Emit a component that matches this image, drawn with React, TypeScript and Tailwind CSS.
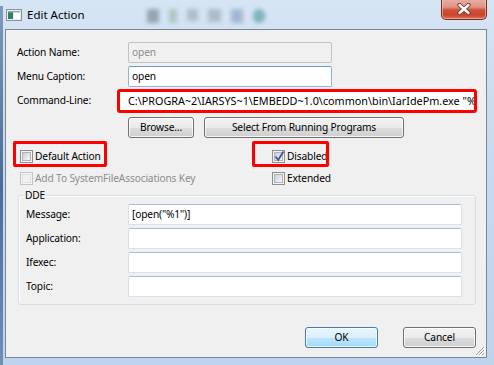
import React from "react";

function TextBox({
  value = "",
  variant = "normal",
  className = "",
}: {
  value?: string;
  variant?: "normal" | "disabled" | "focused";
  className?: string;
}) {
  const styles =
    variant === "disabled"
      ? "border-[#c3c3c3] bg-[#f0f0f0] text-[#8d8d8d]"
      : variant === "focused"
      ? "border-[#8fb5dc] border-t-[#6e9ccc] bg-white text-black"
      : "border-[#d6e1ec] border-t-[#a9bdd2] bg-white text-black";
  return (
    <div
      className={`flex h-[21px] items-center overflow-hidden whitespace-nowrap rounded-[2px] border pl-[3px] ${styles} ${className}`}
    >
      {value}
    </div>
  );
}

function Button({
  label,
  primary = false,
  className = "",
}: {
  label: string;
  primary?: boolean;
  className?: string;
}) {
  const styles = primary
    ? "border-[#3c7fb1] bg-[linear-gradient(to_bottom,#eaf6fd_0%,#d9f0fc_50%,#bee6fd_50%,#a7d9f5_100%)]"
    : "border-[#707070] bg-[linear-gradient(to_bottom,#f2f2f2_0%,#ebebeb_50%,#dddddd_50%,#cfcfcf_100%)]";
  return (
    <div
      className={`flex h-[21px] items-center justify-center rounded-[3px] border text-black shadow-[inset_0_0_0_1px_rgba(255,255,255,0.8)] ${styles} ${className}`}
    >
      {label}
    </div>
  );
}

function CheckBox({
  checked = false,
  disabled = false,
}: {
  checked?: boolean;
  disabled?: boolean;
}) {
  return (
    <span
      className={`relative flex h-[13px] w-[13px] shrink-0 items-center justify-center border ${
        disabled
          ? "border-[#c4c4c4] bg-[#f4f4f4]"
          : "border-[#8e8f8f] bg-[#f4f4f4]"
      }`}
    >
      <span
        className={`h-[9px] w-[9px] border ${
          disabled
            ? "border-[#e0e0e0] bg-[#f2f2f2]"
            : "border-[#aeb3b9] bg-[linear-gradient(135deg,#cbcfd5,#f6f6f6)]"
        }`}
      />
      {checked && (
        <svg
          className="absolute left-[1px] top-[-1px]"
          width="11"
          height="12"
          viewBox="0 0 11 12"
        >
          <path
            d="M1.5 6.5 L4.2 10 L9.5 1.5"
            fill="none"
            stroke="#3a57a0"
            strokeWidth="1.8"
          />
        </svg>
      )}
    </span>
  );
}

function TitleIcon() {
  return (
    <svg width="16" height="12" viewBox="0 0 16 12">
      <rect x="0.5" y="0.5" width="15" height="11" fill="#e9eef2" stroke="#8a9198" />
      <rect x="2" y="2" width="5" height="8" fill="#2f7d6b" />
      <rect x="8" y="2" width="6" height="8" fill="#ffffff" />
      <rect x="2" y="2" width="12" height="1.5" fill="#9aa7b3" />
    </svg>
  );
}

function CloseButton() {
  return (
    <div className="relative mt-[-1px] flex h-[21px] w-[46px] items-center justify-center rounded-b-[5px] border border-t-0 border-[#7a2a1e] bg-[linear-gradient(to_bottom,#eab0a3_0%,#e09482_40%,#cc5238_55%,#c9452d_80%,#d8725c_100%)] shadow-[inset_0_0_0_1px_rgba(255,220,210,0.5)]">
      <svg width="16" height="12" viewBox="0 0 16 12">
        <path
          d="M3.5 2 L12.5 10 M12.5 2 L3.5 10"
          stroke="#6b3a32"
          strokeWidth="4.2"
          strokeLinecap="round"
        />
        <path
          d="M3.5 2 L12.5 10 M12.5 2 L3.5 10"
          stroke="#ffffff"
          strokeWidth="2.4"
          strokeLinecap="round"
        />
      </svg>
    </div>
  );
}

function ResizeGrip() {
  return (
    <svg
      className="absolute bottom-[1px] right-[1px]"
      width="11"
      height="11"
      viewBox="0 0 11 11"
    >
      <path d="M10 2 L2 10 M10 5 L5 10 M10 8 L8 10" stroke="#a0a0a0" strokeWidth="1" />
      <path d="M11 3 L3 11 M11 6 L6 11 M11 9 L9 11" stroke="#ffffff" strokeWidth="1" />
    </svg>
  );
}

export default function App() {
  return (
    <div className="relative h-[365px] w-[494px] overflow-hidden bg-[linear-gradient(to_bottom,#d6e5f4_0%,#c9dcf0_30%,#bed4ec_100%)] font-['Noto_Sans',sans-serif] text-[10.2px] tracking-[-0.15px] text-black">
      {/* left frame shading */}
      <div className="absolute bottom-0 left-0 top-[6px] w-[3px] bg-[linear-gradient(to_bottom,#7e9bbd,#4b6c94_50%,#6f8fb5)]" />

      {/* Title bar */}
      <div className="flex h-[29px] items-start">
        <div className="ml-[6px] mt-[9px]">
          <TitleIcon />
        </div>
        <div className="ml-[5px] mt-[6px] text-[11.5px] leading-[18px] tracking-normal">Edit Action</div>
        <div className="ml-[62px] mt-[9px] flex gap-[10px] opacity-50 blur-[2px]">
          <span className="h-[14px] w-[12px] bg-[#5b6470]" />
          <span className="h-[14px] w-[8px] bg-[#8aa79a]" />
          <span className="h-[12px] w-[11px] bg-[#8c96a1]" />
          <span className="h-[13px] w-[13px] bg-[#8a939c]" />
          <span className="h-[14px] w-[12px] bg-[#6f8db4]" />
          <span className="h-[14px] w-[12px] rounded-full bg-[#2f7f86]" />
        </div>
        <div className="ml-auto mr-[7px]">
          <CloseButton />
        </div>
      </div>

      {/* Client area */}
      <div className="relative ml-[5px] mr-[7px] h-[329px] border border-[#7b8796] bg-[#f0f0f0]">
        <div className="flex flex-col">
          {/* Action Name */}
          <div className="mt-[12px] flex h-[21px] items-center">
            <div className="box-content w-[111px] pl-[11px]">Action Name:</div>
            <TextBox value="open" variant="disabled" className="w-[204px]" />
          </div>
          {/* Menu Caption */}
          <div className="mt-[3px] flex h-[21px] items-center">
            <div className="box-content w-[111px] pl-[11px]">Menu Caption:</div>
            <TextBox value="open" variant="focused" className="w-[204px]" />
          </div>
          {/* Command line */}
          <div className="mt-[2px] flex h-[24px] items-center">
            <div className="box-content w-[100px] pl-[11px]">Command-Line:</div>
            <div className="flex h-[24px] w-[360px] items-center overflow-hidden whitespace-nowrap rounded-[3px] border-[3px] border-[#ff0000] bg-white pl-[8px] text-[10.8px] tracking-normal">
              C:\PROGRA~2\IARSYS~1\EMBEDD~1.0\common\bin\IarIdePm.exe "%1"
            </div>
          </div>
          {/* Buttons */}
          <div className="ml-[122px] mt-[4px] flex gap-[10px]">
            <Button label="Browse..." className="w-[66px]" />
            <Button label="Select From Running Programs" className="w-[200px]" />
          </div>
          {/* Checkbox rows */}
          <div className="mt-[8px] flex h-[22px] items-center pl-[14px]">
            <div className="relative flex w-[252px] items-center gap-[2px]">
              <CheckBox />
              <span>Default Action</span>
              <div className="absolute left-[-7px] top-[-8px] h-[26px] w-[94px] rounded-[2px] border-[3px] border-[#ff0000]" />
            </div>
            <div className="relative flex items-center gap-[2px]">
              <CheckBox checked />
              <span>Disabled</span>
              <div className="absolute left-[-20px] top-[-8px] h-[26px] w-[77px] rounded-[2px] border-[3px] border-[#ff0000]" />
            </div>
          </div>
          <div className="flex h-[22px] items-center pl-[14px]">
            <div className="flex w-[252px] items-center gap-[2px] text-[#8d8d8d]">
              <CheckBox disabled />
              <span>Add To SystemFileAssociations Key</span>
            </div>
            <div className="flex items-center gap-[2px]">
              <CheckBox />
              <span>Extended</span>
            </div>
          </div>

          {/* DDE group */}
          <div className="relative ml-[12px] mt-[5px] w-[458px] rounded-[3px] border border-[#d5dfe5] pb-[7px] pl-[7px] pr-[13px] pt-[8px] shadow-[inset_1px_1px_0_#ffffff]">
            <div className="absolute left-[5px] top-[-8px] bg-[#f0f0f0] px-[1px] leading-[14px]">DDE</div>
            <div className="flex flex-col gap-[3px]">
              <div className="flex h-[21px] items-center">
                <div className="w-[102px]">Message:</div>
                <TextBox value={'[open("%1")]'} className="w-[334px]" />
              </div>
              <div className="flex h-[21px] items-center">
                <div className="w-[102px]">Application:</div>
                <TextBox className="w-[334px]" />
              </div>
              <div className="flex h-[21px] items-center">
                <div className="w-[102px]">Ifexec:</div>
                <TextBox className="w-[334px]" />
              </div>
              <div className="flex h-[21px] items-center">
                <div className="w-[102px]">Topic:</div>
                <TextBox className="w-[334px]" />
              </div>
            </div>
          </div>

          {/* OK / Cancel */}
          <div className="mt-[22px] flex justify-end gap-[25px] pr-[10px]">
            <Button label="OK" primary className="w-[73px]" />
            <Button label="Cancel" className="w-[73px]" />
          </div>
        </div>
        <ResizeGrip />
      </div>
    </div>
  );
}
